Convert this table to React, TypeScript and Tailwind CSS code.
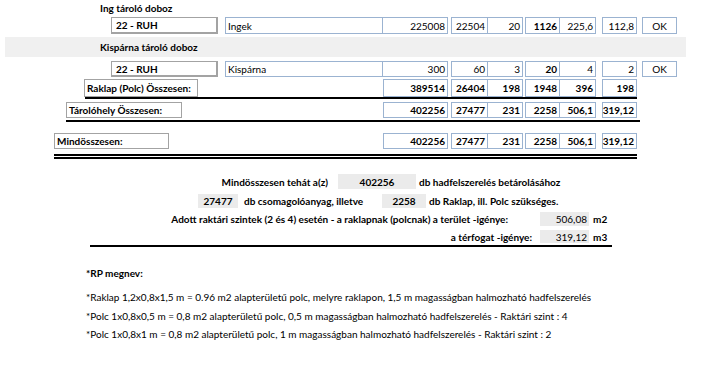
const blue = "border border-[#9bb3d1]";

type Cell = { v: string; b?: boolean };

function NumCells({ cells, ok }: { cells: Cell[]; ok?: boolean }) {
  const widths = [
    "w-[65px]",
    "ml-[3px] w-[37px]",
    "w-[35px] border-l-0",
    "ml-[2px] w-[35px]",
    "w-[36px] border-l-0",
    "ml-[6px] w-[35px]",
  ];
  return (
    <>
      {cells.map((c, i) => (
        <div
          key={i}
          className={`${blue} ${widths[i]} h-full flex items-center justify-end pr-[2px] ${c.b ? "font-bold" : ""}`}
        >
          {c.v}
        </div>
      ))}
      {ok && (
        <div className={`${blue} ml-[5px] w-[35px] h-full flex items-center justify-center`}>OK</div>
      )}
    </>
  );
}

function ItemRow({ name, cells, h }: { name: string; cells: Cell[]; h: string }) {
  return (
    <div className={`flex ${h} ml-[111px]`}>
      <div className="w-[107px] h-full border border-r-2 border-b-2 border-[#a3a3a3] flex items-center pl-[4px] font-bold">
        22 - RUH
      </div>
      <div className={`${blue} ml-[7px] w-[158px] h-full flex items-center pl-[2px]`}>{name}</div>
      <div className="flex h-full [&>div:first-child]:border-l-0">
        <NumCells cells={cells} ok />
      </div>
    </div>
  );
}

function SumRow({ label, lw, ml, gap, cells, h }: { label: string; lw: string; ml: string; gap: string; cells: Cell[]; h: string }) {
  return (
    <div className={`flex ${h} ${ml}`}>
      <div className={`${lw} h-full border border-[#a3a3a3] flex items-center pl-[2px] font-bold`}>{label}</div>
      <div className={`flex h-full ${gap}`}>
        <NumCells cells={cells} />
      </div>
    </div>
  );
}

const all = (vals: string[]) => vals.map((v) => ({ v, b: true }));

export default function App() {
  return (
    <div className="w-[709px] h-[381px] overflow-hidden bg-white text-black text-[10px] leading-none font-['Lato','Liberation_Sans',sans-serif]">
      <div className="h-[15px] flex items-center pl-[100px] font-bold">Ing tároló doboz</div>

      <div className="mt-[2px]">
        <ItemRow
          name="Ingek"
          h="h-[17px]"
          cells={[
            { v: "225008" },
            { v: "22504" },
            { v: "20" },
            { v: "1126", b: true },
            { v: "225,6" },
            { v: "112,8" },
          ]}
        />
      </div>

      <div className="mt-[3px] ml-[5px] w-[681px] h-[20px] bg-[#f0f0f0] flex items-center pl-[95px] font-bold">
        Kispárna tároló doboz
      </div>

      <div className="mt-[4px]">
        <ItemRow
          name="Kispárna"
          h="h-[16px]"
          cells={[
            { v: "300" },
            { v: "60" },
            { v: "3" },
            { v: "20", b: true },
            { v: "4" },
            { v: "2" },
          ]}
        />
      </div>

      <div className="mt-[2px]">
        <SumRow
          label="Raklap (Polc) Összesen:"
          lw="w-[114px]"
          ml="ml-[84px]"
          gap="ml-[185px]"
          h="h-[18px]"
          cells={all(["389514", "26404", "198", "1948", "396", "198"])}
        />
      </div>
      <div className="ml-[85px] w-[552px] h-[2px] bg-black" />

      <div className="mt-[3px]">
        <SumRow
          label="Tárolóhely Összesen:"
          lw="w-[116px]"
          ml="ml-[66px]"
          gap="ml-[201px]"
          h="h-[16px]"
          cells={all(["402256", "27477", "231", "2258", "506,1", "319,12"])}
        />
      </div>
      <div className="mt-[2px] ml-[66px] w-[574px] h-[2px] bg-black" />

      <div className="mt-[11px]">
        <SumRow
          label="Mindösszesen:"
          lw="w-[115px]"
          ml="ml-[54px]"
          gap="ml-[214px]"
          h="h-[16px]"
          cells={all(["402256", "27477", "231", "2258", "506,1", "319,12"])}
        />
      </div>
      <div className="mt-[5px] ml-[54px] w-[583px] h-[5px] border-y-2 border-black" />

      <div className="font-bold">
        <div className="mt-[15px] h-[15px] flex items-center">
          <div className="ml-[180px] w-[148px] text-right">Mindösszesen tehát a(z)</div>
          <div className="ml-[10px] w-[78px] h-full bg-[#ebebeb] flex items-center justify-center">402256</div>
          <div className="ml-[3px]">db hadfelszerelés betárolásához</div>
        </div>
        <div className="mt-[5px] h-[14px] flex items-center">
          <div className="ml-[198px] w-[40px] h-full bg-[#ebebeb] flex items-center justify-center">27477</div>
          <div className="ml-[6px] w-[138px]">db csomagolóanyag, illetve</div>
          <div className="w-[44px] h-full bg-[#ebebeb] flex items-center justify-center">2258</div>
          <div className="ml-[3px]">db Raklap, ill. Polc szükséges.</div>
        </div>
        <div className="mt-[4px] h-[14px] flex items-center">
          <div className="ml-[90px] w-[418px] text-right">
            Adott raktári szintek (2 és 4) esetén - a raklapnak (polcnak) a terület -igénye:
          </div>
          <div className="ml-[32px] w-[49px] h-full bg-[#ebebeb] flex items-center justify-end pr-[2px] font-normal">
            506,08
          </div>
          <div className="ml-[4px]">m2</div>
        </div>
        <div className="mt-[4px] h-[13px] flex items-center">
          <div className="ml-[90px] w-[442px] text-right">a térfogat -igénye:</div>
          <div className="ml-[8px] w-[49px] h-full bg-[#ebebeb] flex items-center justify-end pr-[2px] font-normal">
            319,12
          </div>
          <div className="ml-[4px]">m3</div>
        </div>
      </div>
      <div className="mt-[2px] ml-[90px] w-[522px] h-[2px] bg-black" />

      <div className="ml-[86px]">
        <div className="mt-[19px] h-[14px] flex items-center font-bold">*RP megnev:</div>
        <div className="mt-[10px] h-[14px] flex items-center">
          *Raklap 1,2x0,8x1,5 m = 0.96 m2 alapterületű polc, melyre raklapon, 1,5 m magasságban  halmozható hadfelszerelés
        </div>
        <div className="mt-[5px] h-[14px] flex items-center">
          *Polc 1x0,8x0,5 m = 0,8 m2 alapterületű polc, 0,5 m magasságban  halmozható hadfelszerelés - Raktári szint : 4
        </div>
        <div className="mt-[4px] h-[14px] flex items-center">
          *Polc 1x0,8x1 m = 0,8 m2 alapterületű polc, 1 m magasságban  halmozható hadfelszerelés - Raktári szint : 2
        </div>
      </div>
    </div>
  );
}
